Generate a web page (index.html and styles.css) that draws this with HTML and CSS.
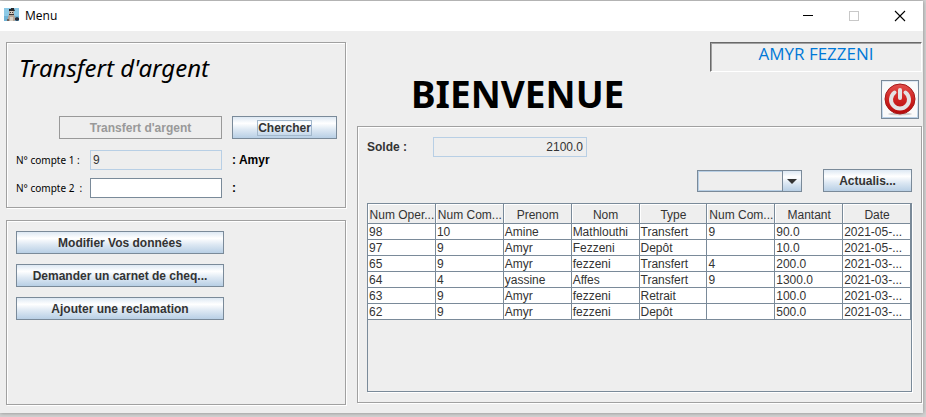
FILE: index.html
```html
<!DOCTYPE html>
<html lang="fr">
<head>
<meta charset="utf-8">
<title>Menu</title>
<link rel="stylesheet" href="styles.css">
</head>
<body>
<div class="window">
  <header class="titlebar">
    <svg class="app-icon" viewBox="0 0 15 13" aria-hidden="true">
      <rect width="15" height="13" fill="#8cc9e6"/>
      <path d="M0 8h15v5H0z" fill="#6db2d6"/>
      <path d="M5 3h5v4l1 2v4H4V9l1-2z" fill="#b5a597"/>
      <path d="M6 3h3v3H6z" fill="#d8cabc"/>
      <path d="M5 1h2v-1h3v1l1 2H5z" fill="#252528"/>
      <path d="M5 6h5v1H5zM6 4h1v1H6zM8 4h1v1H8z" fill="#3c3638"/>
      <path d="M6 9h3v4H6z" fill="#d9d0c4"/>
      <path d="M11 10l2-1 2 1v2l-2 1-2-1z" fill="#272c3a"/>
      <path d="M3 11h2v2H3z" fill="#6d625c"/>
    </svg>
    <span class="titlebar-text">Menu</span>
    <div class="window-controls">
      <button type="button" class="window-control" aria-label="Réduire">
        <svg viewBox="0 0 12 12"><path d="M1 5.5h10" stroke="#000"/></svg>
      </button>
      <button type="button" class="window-control" aria-label="Agrandir" disabled>
        <svg viewBox="0 0 12 12"><rect x="1.5" y="1.5" width="9" height="9" fill="none" stroke="#c8c8c8"/></svg>
      </button>
      <button type="button" class="window-control" aria-label="Fermer">
        <svg viewBox="0 0 12 12"><path d="M1 1l10 10M11 1L1 11" stroke="#000" stroke-width="1.1"/></svg>
      </button>
    </div>
  </header>

  <main class="content">
    <div class="side">
      <section class="panel transfer">
        <h2 class="transfer-title">Transfert d'argent</h2>
        <div class="transfer-actions">
          <button type="button" class="btn btn-transfer" disabled>Transfert d'argent</button>
          <button type="button" class="btn btn-search"><span class="focus-ring">Chercher</span></button>
        </div>
        <div class="account">
          <label class="account-label" for="account1">N° compte 1 :</label>
          <input class="field field-readonly" id="account1" type="text" value="9" readonly>
          <output class="account-name" for="account1">: Amyr</output>
        </div>
        <div class="account">
          <label class="account-label" for="account2">N° compte 2&nbsp; :</label>
          <input class="field" id="account2" type="text">
          <output class="account-name" for="account2">:</output>
        </div>
      </section>
      <section class="panel actions">
        <button type="button" class="btn">Modifier Vos données</button>
        <button type="button" class="btn">Demander un carnet de cheq...</button>
        <button type="button" class="btn">Ajouter une reclamation</button>
      </section>
    </div>

    <div class="main">
      <div class="welcome">
        <h1 class="welcome-title">BIENVENUE</h1>
        <div class="session">
          <div class="user-name">AMYR FEZZENI</div>
          <button type="button" class="btn btn-power" aria-label="Déconnexion">
            <svg viewBox="0 0 34 35" aria-hidden="true">
              <defs>
                <linearGradient id="red" x1="0" y1="0" x2="0" y2="1">
                  <stop offset="0" stop-color="#e2504d"/>
                  <stop offset="0.5" stop-color="#cf2422"/>
                  <stop offset="1" stop-color="#b50b0b"/>
                </linearGradient>
              </defs>
              <rect width="34" height="35" fill="#fafafa"/>
              <ellipse cx="17" cy="32" rx="12" ry="1.5" fill="#cfcfcf"/>
              <circle cx="17" cy="17" r="15" fill="url(#red)" stroke="#a51a1a"/>
              <path d="M11.500 10.500a9 9 0 1 0 11 0" fill="none" stroke="#e4e4e4" stroke-width="4" stroke-linecap="round"/>
              <path d="M17 8v8" stroke="#e4e4e4" stroke-width="4" stroke-linecap="round"/>
            </svg>
          </button>
        </div>
      </div>

      <section class="panel operations">
        <div class="balance">
          <label class="balance-label" for="balance">Solde :</label>
          <input class="field field-readonly field-amount" id="balance" type="text" value="2100.0" readonly>
        </div>
        <div class="filters">
          <div class="combo">
            <select class="combo-select" aria-label="Filtre"><option></option></select>
            <span class="combo-arrow"><svg viewBox="0 0 10 5" aria-hidden="true"><path d="M0 0h10L5 5z" fill="#333"/></svg></span>
          </div>
          <button type="button" class="btn btn-refresh">Actualis...</button>
        </div>
        <div class="table-box">
          <table class="table">
            <thead>
              <tr><th>Num Oper...</th><th>Num Com...</th><th>Prenom</th><th>Nom</th><th>Type</th><th>Num Com...</th><th>Mantant</th><th>Date</th></tr>
            </thead>
            <tbody>
              <tr><td>98</td><td>10</td><td>Amine</td><td>Mathlouthi</td><td>Transfert</td><td>9</td><td>90.0</td><td>2021-05-...</td></tr>
              <tr><td>97</td><td>9</td><td>Amyr</td><td>Fezzeni</td><td>Depôt</td><td></td><td>10.0</td><td>2021-05-...</td></tr>
              <tr><td>65</td><td>9</td><td>Amyr</td><td>fezzeni</td><td>Transfert</td><td>4</td><td>200.0</td><td>2021-03-...</td></tr>
              <tr><td>64</td><td>4</td><td>yassine</td><td>Affes</td><td>Transfert</td><td>9</td><td>1300.0</td><td>2021-03-...</td></tr>
              <tr><td>63</td><td>9</td><td>Amyr</td><td>fezzeni</td><td>Retrait</td><td></td><td>100.0</td><td>2021-03-...</td></tr>
              <tr><td>62</td><td>9</td><td>Amyr</td><td>fezzeni</td><td>Depôt</td><td></td><td>500.0</td><td>2021-03-...</td></tr>
            </tbody>
          </table>
        </div>
      </section>
    </div>
  </main>
</div>
</body>
</html>
```
FILE: styles.css
```css
* {
  box-sizing: border-box;
}

body {
  margin: 0;
  min-height: 100vh;
  padding: 1px 3px 4px 0;
  display: flex;
  background: #d2d2d2;
  font: 12px/16px "Liberation Sans", Arial, sans-serif;
  color: #333;
}

button,
input,
select {
  margin: 0;
  padding: 0;
  font: inherit;
  color: inherit;
}

.window {
  flex: 1;
  display: flex;
  flex-direction: column;
  background: #eee;
  box-shadow: 0 0 4px #888;
}

/* Title bar */

.titlebar {
  display: flex;
  align-items: center;
  height: 30px;
  padding-left: 4px;
  background: #fff;
}

.app-icon {
  width: 15px;
  height: 13px;
  margin-bottom: 3px;
}

.titlebar-text {
  margin-left: 6px;
  font-family: "Open Sans", sans-serif;
  color: #000;
}

.window-controls {
  display: flex;
  margin-left: auto;
}

.window-control {
  display: grid;
  place-items: center;
  width: 46px;
  height: 28px;
  border: 0;
  background: none;
}

.window-control svg {
  width: 12px;
  height: 12px;
}

/* Layout */

.content {
  flex: 1;
  display: grid;
  grid-template-columns: 340fr 565fr;
  gap: 11px;
  padding: 11px 1px 8px 6px;
}

.side,
.main {
  display: flex;
  flex-direction: column;
}

.side {
  gap: 12px;
}

.panel {
  border: 1px solid #a0a0a0;
  box-shadow: 1px 1px 0 #fff, inset 1px 1px 0 #fff;
}

/* Shared controls */

.btn {
  height: 23px;
  border: 1px solid #7a8a99;
  background: linear-gradient(#dde8f3, #fff 30%, #dde8f3 60%, #b8cfe5);
  font-weight: bold;
  line-height: 16px;
}

.btn:disabled {
  border-color: #999;
  background: none;
  color: #999;
}

.field {
  height: 20px;
  padding: 0 2px;
  border: 1px solid #7a8a99;
  background: #fff;
}

.field-readonly {
  border-color: #b8cfe5;
  background: #eee;
}

/* Transfer */

.transfer {
  padding: 8px 8px 9px 9px;
}

.transfer-title {
  margin: 0 0 31px 3px;
  font: italic 24px/34px "Noto Sans", sans-serif;
  color: #000;
}

.transfer-actions {
  display: flex;
  justify-content: flex-end;
  gap: 10px;
  margin-bottom: 11px;
}

.btn-transfer {
  width: 163px;
}

.btn-search {
  width: 105px;
}

.focus-ring {
  outline: 1px solid #a3b8cc;
}

.account {
  display: grid;
  grid-template-columns: 74px 132px 1fr;
  align-items: center;
}

.account + .account {
  margin-top: 8px;
}

.account-label {
  font: 10px/16px "Noto Sans", sans-serif;
  color: #000;
}

.account-name {
  margin-left: 10px;
  font-weight: bold;
  color: #000;
}

/* Actions */

.actions {
  flex: 1;
  display: flex;
  flex-direction: column;
  align-items: flex-start;
  gap: 10px;
  padding: 10px 9px;
}

.actions .btn {
  width: 208px;
}

/* Welcome */

.welcome {
  display: grid;
  grid-template-columns: 1fr 212px;
  padding-bottom: 7px;
}

.welcome-title {
  margin: 0;
  padding-top: 28px;
  padding-left: 54px;
  font: bold 37px/48px "Noto Sans", sans-serif;
  color: #000;
}

.session {
  display: flex;
  flex-direction: column;
  align-items: flex-end;
  gap: 8px;
}

.user-name {
  align-self: stretch;
  height: 30px;
  border: 1px solid;
  border-color: #696969 #fff #fff #696969;
  box-shadow: inset 1px 1px 0 #a0a0a0;
  font: 17px/22px "Open Sans", sans-serif;
  text-align: center;
  color: #0078d7;
}

.btn-power {
  width: 38px;
  height: 39px;
  margin-right: 3px;
}

.btn-power svg {
  display: block;
  width: 34px;
  height: 35px;
  margin: 0 auto;
}

/* Operations */

.operations {
  flex: 1;
  display: flex;
  flex-direction: column;
  padding: 10px 9px;
  margin-bottom: 2px;
}

.balance {
  display: grid;
  grid-template-columns: 66px 154px;
  align-items: center;
}

.balance-label {
  font-weight: bold;
}

.field-amount {
  padding-right: 3px;
  text-align: right;
}

.filters {
  display: flex;
  justify-content: flex-end;
  align-items: flex-end;
  gap: 21px;
  margin: 12px 0 11px;
}

.combo {
  position: relative;
  width: 105px;
  height: 22px;
}

.combo-select {
  width: 100%;
  height: 100%;
  appearance: none;
  border: 1px solid #7a8a99;
  border-radius: 0;
  background: #eee;
  box-shadow: inset 0 0 0 1px #b8cfe5;
}

.combo-arrow {
  position: absolute;
  top: 0;
  right: 0;
  display: grid;
  place-items: center;
  width: 20px;
  height: 100%;
  border: 1px solid #7a8a99;
  background: linear-gradient(#dde8f3, #fff 30%, #dde8f3 60%, #b8cfe5);
  pointer-events: none;
}

.combo-arrow svg {
  width: 10px;
  height: 5px;
}

.btn-refresh {
  width: 89px;
}

.table-box {
  flex: 1;
  border: 1px solid #7a8a99;
  box-shadow: 1px 1px 0 #fff;
}

.table {
  width: 100%;
  table-layout: fixed;
  border-collapse: separate;
  border-spacing: 0;
  background: #fff;
}

.table th,
.table td {
  height: 16px;
  padding: 1px 0 0 1px;
  border-right: 1px solid #7a8a99;
  border-bottom: 1px solid #7a8a99;
  font-weight: normal;
  line-height: 14px;
  text-align: left;
  white-space: nowrap;
}

.table th {
  height: 20px;
  padding-top: 2px;
  background: #eee;
  box-shadow: inset 1px 1px 0 #fff;
  text-align: center;
}
```
